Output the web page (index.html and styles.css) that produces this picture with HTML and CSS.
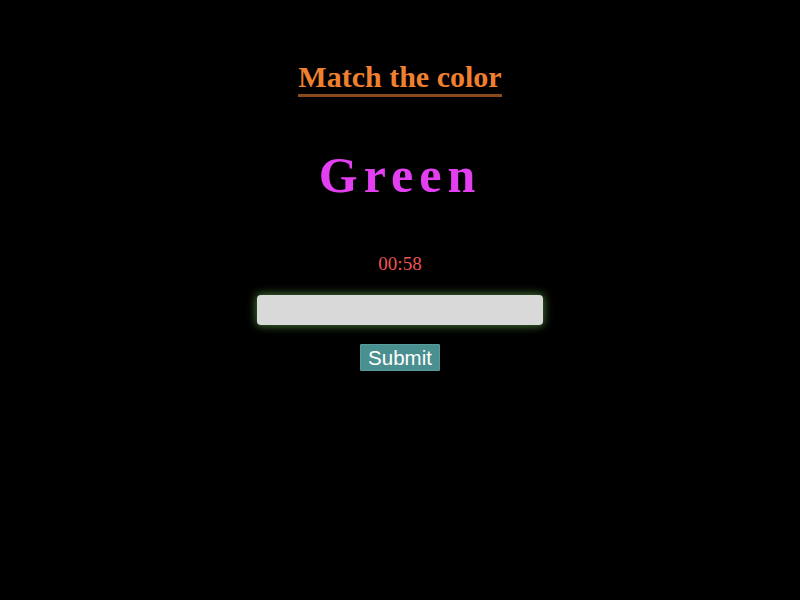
FILE: index.html
```html
<!DOCTYPE html>
<html>
<head>
<meta charset="utf-8">
<link rel="stylesheet" href="styles.css">
</head>
<body>
<main class="game">
  <h1 class="title">Match the color</h1>
  <div class="word">Green</div>
  <div class="timer">00:58</div>
  <input class="answer" type="text">
  <button class="submit">Submit</button>
</main>
</body>
</html>
```
FILE: styles.css
```css
html, body {
  margin: 0;
  padding: 0;
  background: #000;
  height: 100%;
}
.game {
  display: flex;
  flex-direction: column;
  align-items: center;
  padding-top: 60px;
  font-family: "Liberation Serif", "Times New Roman", serif;
}
.title {
  margin: 0;
  font-size: 30px;
  font-weight: bold;
  line-height: 34px;
  color: #ee8030;
  border-bottom: 3px solid #8a4a1c;
}
.word {
  margin-top: 48px;
  font-size: 50px;
  font-weight: bold;
  line-height: 60px;
  letter-spacing: 6px;
  color: #e23ff0;
}
.timer {
  margin-top: 48px;
  font-size: 19px;
  line-height: 22px;
  color: #f05454;
}
.answer {
  margin-top: 20px;
  width: 286px;
  height: 30px;
  box-sizing: border-box;
  border: none;
  border-radius: 4px;
  background: #d9d9d9;
  box-shadow: 0 0 8px 1px rgba(120, 200, 90, 0.6);
  outline: none;
}
.submit {
  margin-top: 19px;
  height: 27px;
  padding: 0 7px;
  font-family: "Liberation Sans", Arial, sans-serif;
  font-size: 20.5px;
  color: #fff;
  background: #4a9090;
  border: 1px solid #5a9c9c;
  border-radius: 1px;
}
```
